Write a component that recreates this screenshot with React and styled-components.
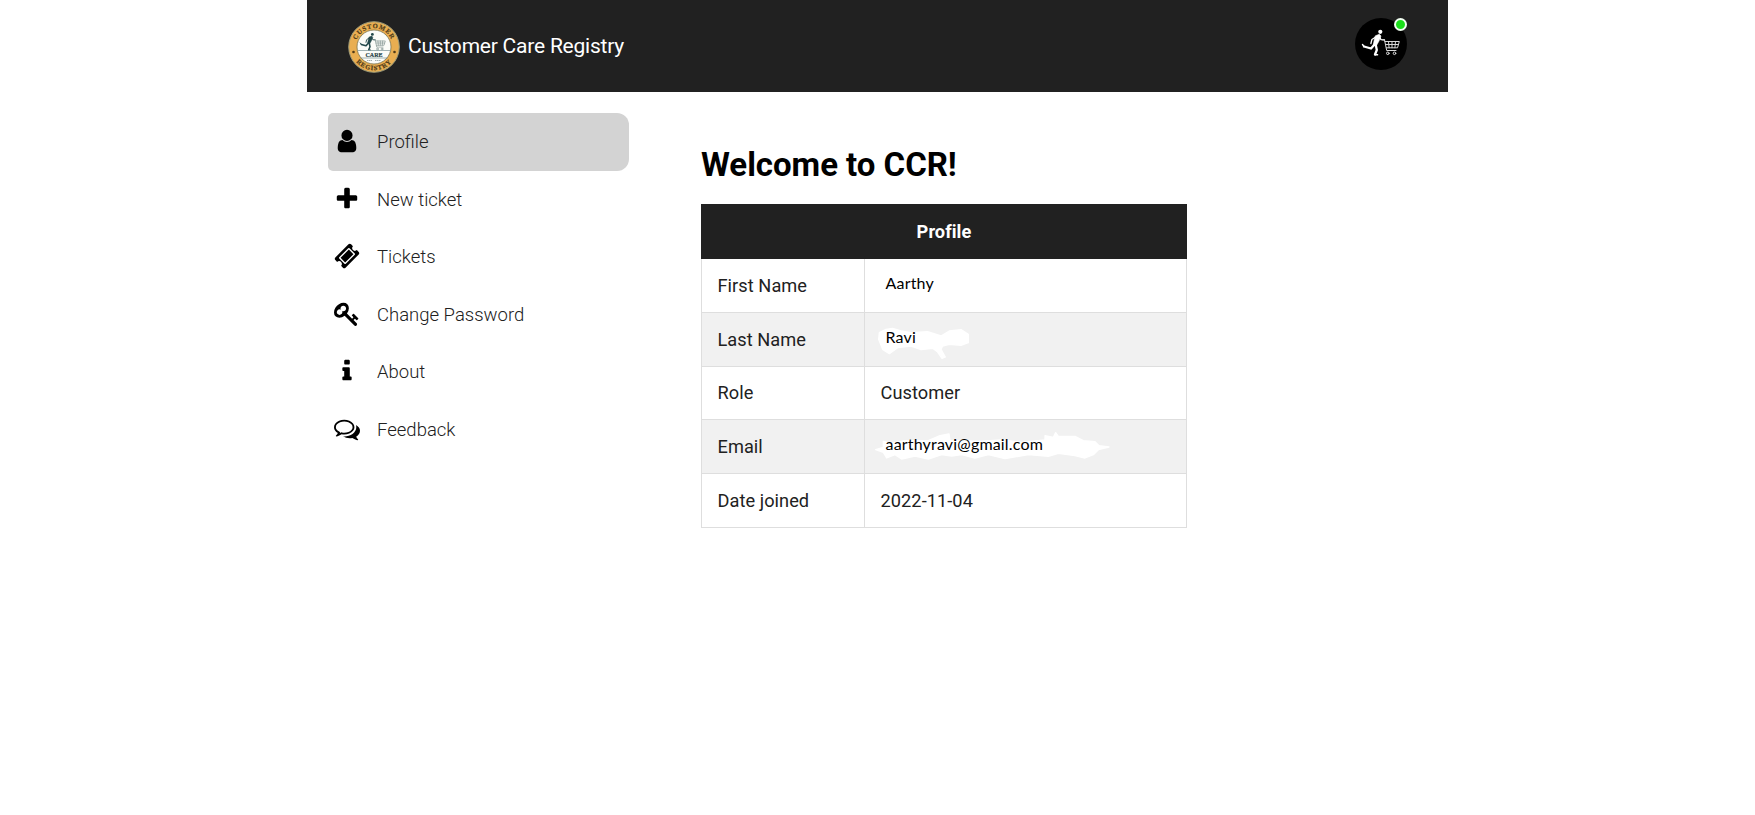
import React from 'react';
import styled, { createGlobalStyle } from 'styled-components';

const GlobalStyle = createGlobalStyle`
  *, *::before, *::after { box-sizing: border-box; }
  body { margin: 0; background: #fff; font-family: Roboto, "Liberation Sans", sans-serif; color: #212121; }
`;

const Page = styled.div`
  width: 1141px;
  min-height: 815px;
  margin-left: 307px;
`;

const Header = styled.header`
  display: flex;
  align-items: center;
  justify-content: space-between;
  height: 92px;
  padding: 0 41px;
  background: #212121;
`;

const Brand = styled.div`
  display: flex;
  align-items: center;
  gap: 8px;
  padding-top: 1px;
`;

const BrandName = styled.span`
  margin-bottom: 2px;
  color: #fff;
  font-size: 21px;
  line-height: 28px;
  letter-spacing: -0.22px;
  white-space: nowrap;
`;

const Avatar = styled.div`
  position: relative;
  width: 52px;
  height: 52px;
  margin-bottom: 5px;
  border-radius: 50%;
  background: #000;
`;

const OnlineDot = styled.span`
  position: absolute;
  top: 0;
  right: 0;
  width: 13px;
  height: 13px;
  border: 2px solid #f2fff2;
  border-radius: 50%;
  background: #1be01b;
`;

const Body = styled.div`
  display: flex;
  align-items: flex-start;
  padding: 21px 0 0 21px;
`;

const Sidebar = styled.nav`
  width: 301px;
`;

const MenuItem = styled.a`
  display: flex;
  align-items: center;
  gap: 17px;
  height: ${(p) => (p.$active ? 58 : 57.5)}px;
  padding-left: 6px;
  border-radius: 5px 12px 12px 5px;
  background: ${(p) => (p.$active ? '#d3d3d3' : 'transparent')};
  color: #212121;
  font-size: 18.5px;
  font-weight: 300;
`;

const MenuIcon = styled.svg`
  width: 26px;
  height: 26px;
  margin-bottom: 2px;
  fill: #000;
`;

const MenuLabel = styled.span`
  margin-bottom: 0.5px;
`;

const Content = styled.main`
  width: 485px;
  margin-left: 72px;
  padding-top: 32px;
`;

const Title = styled.h1`
  margin: 0 0 19px;
  color: #000;
  font-size: 33px;
  line-height: 40px;
  font-weight: 700;
  letter-spacing: -0.03px;
  white-space: nowrap;
`;

const Table = styled.table`
  width: 486px;
  border-collapse: collapse;
  table-layout: fixed;
  font-size: 18.2px;
  letter-spacing: 0.06px;
`;

const HeadCell = styled.th`
  height: 54px;
  padding: 0;
  border: 1px solid #212121;
  background: #212121;
  color: #fff;
  font-size: 18.2px;
  font-weight: 700;
`;

const Row = styled.tr`
  height: 53.8px;
  background: ${(p) => (p.$shaded ? '#f1f1f1' : '#fff')};
`;

const Cell = styled.td`
  padding: 0 16px 0 15.5px;
  border: 1px solid #dedede;
`;

const Edited = styled.span`
  position: relative;
  display: inline-block;
  padding-left: 5px;
  bottom: 3px;
  color: #000;
  font-family: Lato, sans-serif;
  font-size: 16px;
  letter-spacing: 0.18px;
`;

const Smudge = styled.svg`
  position: absolute;
  left: -17px;
  top: -15px;
  width: 260px;
  height: 53px;
  fill: #fff;
  stroke: #fff;
  stroke-linejoin: round;
`;

const EditedText = styled.span`
  position: relative;
`;

const icons = {
  user: 'M1536 1399q0 109-62.5 187t-150.5 78h-854q-88 0-150.5-78t-62.5-187q0-85 8.5-160.5t31.5-152 58.5-131 94-89 134.5-34.5q131 128 313 128t313-128q76 0 134.5 34.5t94 89 58.5 131 31.5 152 8.5 160.5zm-256-887q0 159-112.5 271.5t-271.5 112.5-271.5-112.5-112.5-271.5 112.5-271.5 271.5-112.5 271.5 112.5 112.5 271.5z',
  plus: 'M1600 736v192q0 40-28 68t-68 28h-416v416q0 40-28 68t-68 28h-192q-40 0-68-28t-28-68v-416h-416q-40 0-68-28t-28-68v-192q0-40 28-68t68-28h416v-416q0-40 28-68t68-28h192q40 0 68 28t28 68v416h416q40 0 68 28t28 68z',
  ticket: 'M1024 452l316 316-572 572-316-316zm-211 979l618-618q19-19 19-45t-19-45l-362-362q-18-18-45-18t-45 18l-618 618q-19 19-19 45t19 45l362 362q18 18 45 18t45-18zm889-637l-907 908q-37 37-90.5 37t-90.5-37l-126-126q56-56 56-136t-56-136-136-56-136 56l-125-126q-37-37-37-90.5t37-90.5l907-906q37-37 90.5-37t90.5 37l125 125q-56 56-56 136t56 136 136 56 136-56l126 125q37 37 37 90.5t-37 90.5z',
  key: 'M832 512q0-80-56-136t-136-56-136 56-56 136q0 42 19 83-41-19-83-19-80 0-136 56t-56 136 56 136 136 56 136-56 56-136q0-42-19-83 41 19 83 19 80 0 136-56t56-136zm851 704q0 17-49 66t-66 49q-9 0-28.5-16t-36.5-33-38.5-40-24.5-26l-96 96 220 220q28 28 28 68 0 42-39 81t-81 39q-40 0-68-28l-671-671q-176 131-365 131-163 0-265.5-102.5t-102.5-265.5q0-160 95-313t248-248 313-95q163 0 265.5 102.5t102.5 265.5q0 189-131 365l355 355 96-96q-3-3-26-24.5t-40-38.5-33-36.5-16-28.5q0-17 49-66t66-49q13 0 23 10 6 6 46 44.5t82 79.5 86.5 86 73 78 28.5 41z',
  info: 'M1216 1344v128q0 26-19 45t-45 19h-512q-26 0-45-19t-19-45v-128q0-26 19-45t45-19h64v-384h-64q-26 0-45-19t-19-45v-128q0-26 19-45t45-19h384q26 0 45 19t19 45v576h64q26 0 45 19t19 45zm-128-1152v192q0 26-19 45t-45 19h-256q-26 0-45-19t-19-45v-192q0-26 19-45t45-19h256q26 0 45 19t19 45z',
  comments: 'M704 384q-153 0-286 52t-211.5 141-78.5 191q0 82 53 158t149 132l97 56-35 84q34-20 62-39l44-31 53 10q78 14 153 14 153 0 286-52t211.5-141 78.5-191-78.5-191-211.5-141-286-52zm0-128q191 0 353.5 68.5t256.5 186.5 94 257-94 257-256.5 186.5-353.5 68.5q-86 0-176-16-124 88-278 128-36 9-86 16h-3q-11 0-20.5-8t-11.5-21q-1-3-1-6.5t.5-6.5 2-6l2.5-5 3.5-5.5 4-5 4.5-5 4-4.5q5-6 23-25t26-29.5 22.5-29 25-38.5 20.5-44q-124-72-195-177t-71-224q0-139 94-257t256.5-186.5 353.5-68.5zm822 1169q10 24 20.5 44t25 38.5 22.5 29 26 29.5 23 25q1 1 4 4.5t4.5 5 4 5 3.5 5.5l2.5 5 2 6 .5 6.5-1 6.5q-3 14-13 22t-22 7q-50-7-86-16-154-40-278-128-90 16-176 16-271 0-472-132 58 4 88 4 161 0 309-45t264-129q125-92 192-212t67-254q0-77-23-152 129 71 204 178t75 230q0 120-71 224.5t-195 176.5z',
};

const menu = [
  { icon: 'user', label: 'Profile', active: true },
  { icon: 'plus', label: 'New ticket' },
  { icon: 'ticket', label: 'Tickets' },
  { icon: 'key', label: 'Change Password' },
  { icon: 'info', label: 'About' },
  { icon: 'comments', label: 'Feedback' },
];

const smudges = {
  name: {
    box: '9 183 780 159',
    points: '55,245 75,235 95,232 120,240 150,245 200,242 240,255 265,240 300,236 322,250 322,275 300,283 265,280 245,285 240,295 253,318 243,322 230,303 215,292 180,296 150,285 110,290 85,308 65,295 53,265',
  },
  email: {
    box: '7 505 780 159',
    points: '42,597 65,590 65,572 90,578 130,570 200,570 235,555 262,550 265,570 310,570 350,572 420,568 480,575 550,568 550,555 575,560 582,546 590,557 640,557 665,570 700,573 712,585 742,589 710,597 695,612 670,622 640,615 590,608 560,617 500,612 430,624 380,612 340,622 300,612 270,616 240,612 200,625 160,616 120,625 100,612 75,622 65,605',
  },
};

const rows = [
  { label: 'First Name', value: 'Aarthy', edited: true },
  { label: 'Last Name', value: 'Ravi', edited: true, smudge: 'name' },
  { label: 'Role', value: 'Customer' },
  { label: 'Email', value: 'aarthyravi@gmail.com', edited: true, smudge: 'email' },
  { label: 'Date joined', value: '2022-11-04' },
];

const Runner = ({ color, cart }) => (
  <g fill="none" stroke={color} strokeLinecap="round" strokeLinejoin="round">
    <circle cx="24.800" cy="13.800" r="2.100" fill={color} stroke="none" />
    <path d="M20 17.800l3.800-1.600 1.700 1.800-2 5-2.500 4.500-3.200-1 1-5z" fill={color} strokeWidth=".6" />
    <path d="M21 18.500l-4.600 3-1 4M24 19l1.500 2.600 3.500.2" strokeWidth="1.300" />
    <path d="M19 26.500l-3.500 4-7-2M20.300 27l1 5-1.800 4.500" strokeWidth="2.300" />
    <path d="M8.500 28.500l-1.500-2M19.500 36.800h2.600" strokeWidth="1.400" />
    <g stroke={cart} strokeWidth="1">
      <path d="M27 21.800h2l2.200 10.700h9.300M29.500 23.500h14.300l-1.800 6.300H31M30.200 26.500h12.500M33 23.500l.6 6.300M36.500 23.500v6.300M40 23.500l-.6 6.300" />
      <circle cx="32.300" cy="35.300" r="1.300" />
      <circle cx="39" cy="35.300" r="1.300" />
    </g>
  </g>
);

const Logo = () => (
  <svg width="52" height="52" viewBox="0 0 52 52">
    <defs>
      <path id="arcTop" d="M7.200 26a18.800 18.800 0 0 1 37.600 0" />
      <path id="arcBottom" d="M2.800 26a23.200 23.200 0 0 0 46.400 0" />
    </defs>
    <circle cx="26" cy="26" r="25.300" fill="#e9ae51" stroke="#9b9a78" strokeWidth="1" />
    <circle cx="26" cy="26" r="17" fill="#fbfcf8" stroke="#7a744f" strokeWidth=".8" />
    <g fontFamily="Liberation Serif, serif" fontWeight="700" fontSize="6.600" fill="#4e3b19" stroke="#4e3b19" strokeWidth=".2" textAnchor="middle">
      <text letterSpacing=".8"><textPath href="#arcTop" startOffset="50%">CUSTOMER</textPath></text>
      <text letterSpacing=".8"><textPath href="#arcBottom" startOffset="50%">REGISTRY</textPath></text>
    </g>
    <circle cx="5.500" cy="31" r="1.300" fill="#4e3b19" />
    <circle cx="46.500" cy="31" r="1.300" fill="#4e3b19" />
    <g transform="translate(7.500 4) scale(.68)"><Runner color="#23494b" cart="#829391" /></g>
    <path d="M9.500 29.500h33M12.500 37h27" stroke="#779093" strokeWidth=".7" />
    <text x="26" y="35.500" textAnchor="middle" fontFamily="Liberation Serif, serif" fontWeight="700" fontSize="6.400" fill="#263f45" stroke="#263f45" strokeWidth=".2" textLength="17" lengthAdjust="spacingAndGlyphs">CARE</text>
    <path d="M19 39.500h5m3 0h6" stroke="#a4b0b0" strokeWidth="1" strokeDasharray="1.500 .5" />
  </svg>
);

const Value = ({ row }) =>
  row.edited ? (
    <Edited>
      {row.smudge && (
        <Smudge viewBox={smudges[row.smudge].box}>
          <polygon points={smudges[row.smudge].points} strokeWidth="4" />
        </Smudge>
      )}
      <EditedText>{row.value}</EditedText>
    </Edited>
  ) : (
    row.value
  );

export default function App() {
  return (
    <>
      <GlobalStyle />
      <Page>
        <Header>
          <Brand>
            <Logo />
            <BrandName>Customer Care Registry</BrandName>
          </Brand>
          <Avatar>
            <svg width="52" height="52" viewBox="-0.5 0 52 52">
              <Runner color="#fff" cart="#d8d8d8" />
            </svg>
            <OnlineDot />
          </Avatar>
        </Header>
        <Body>
          <Sidebar>
            {menu.map((m) => (
              <MenuItem key={m.label} $active={m.active}>
                <MenuIcon viewBox="0 0 1792 1792">
                  <path d={icons[m.icon]} />
                </MenuIcon>
                <MenuLabel>{m.label}</MenuLabel>
              </MenuItem>
            ))}
          </Sidebar>
          <Content>
            <Title>Welcome to CCR!</Title>
            <Table>
              <colgroup>
                <col width="163" />
                <col />
              </colgroup>
              <thead>
                <tr>
                  <HeadCell colSpan={2}>Profile</HeadCell>
                </tr>
              </thead>
              <tbody>
                {rows.map((r, i) => (
                  <Row key={r.label} $shaded={i % 2 === 1}>
                    <Cell>{r.label}</Cell>
                    <Cell>
                      <Value row={r} />
                    </Cell>
                  </Row>
                ))}
              </tbody>
            </Table>
          </Content>
        </Body>
      </Page>
    </>
  );
}
